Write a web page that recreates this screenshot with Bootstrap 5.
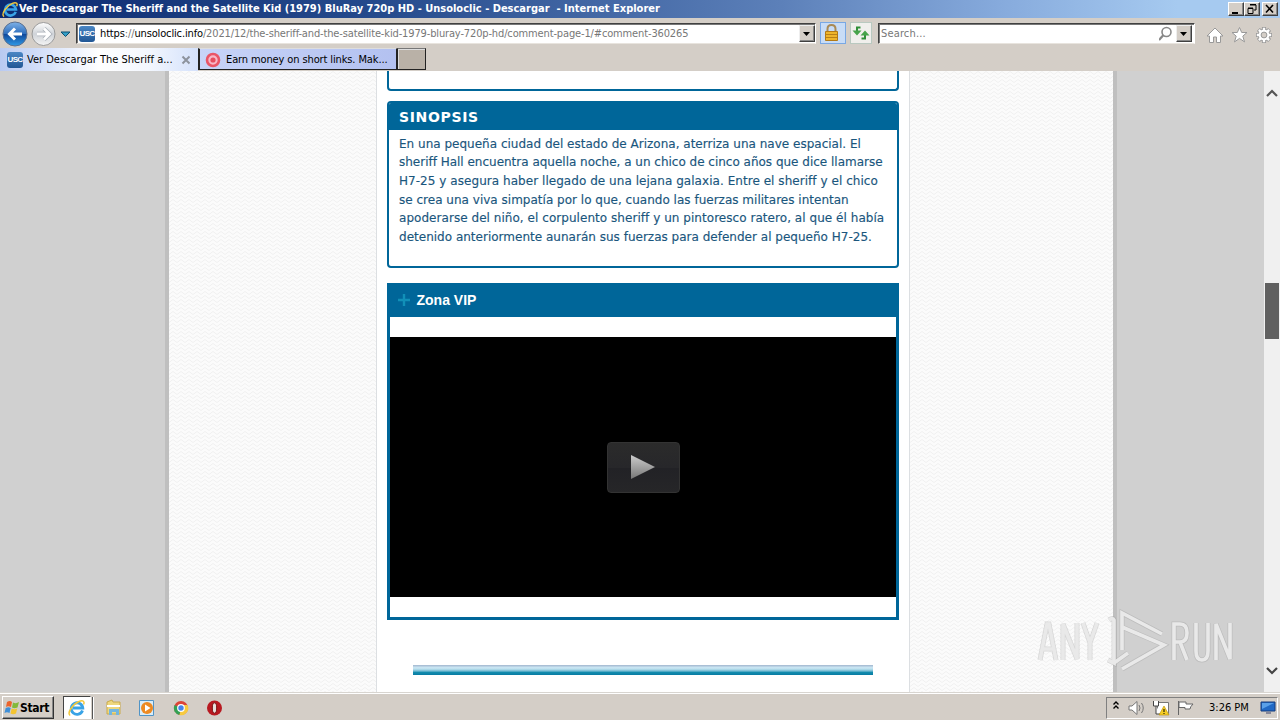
<!DOCTYPE html>
<html lang="es">
<head>
<meta charset="utf-8">
<title>Ver Descargar The Sheriff and the Satellite Kid</title>
<link rel="stylesheet" href="https://cdn.jsdelivr.net/npm/bootstrap@5.3.0/dist/css/bootstrap.min.css">
<style>
body{width:1280px;height:720px;overflow:hidden;background:#d4cec7;color:#000;font:11px/14px "DejaVu Sans Condensed","DejaVu Sans",sans-serif;font-stretch:condensed;white-space:nowrap}
svg{display:block;flex:none}
.titlebar{height:18px;background:linear-gradient(90deg,#0c2a70 0,#264b8d 30%,#5c80b9 61%,#86aadc 78%,#a6caf0 92%);color:#fff;font-weight:700;padding-left:2px}
.titlebar .caption{white-space:pre}
.winbtn{width:16px;height:14px;background:#d4cec7;border:1px solid;border-color:#fff #404040 #404040 #fff;box-shadow:inset -1px -1px #888}
.navrow{height:30px;padding-left:2px;border-top:1px solid #d4cec7}
.field{height:21px;background:#fff;border:1px solid;border-color:#404040 #fff #e8e4de #404040;box-shadow:inset 1px 1px #777;margin-top:4px}
.dropbtn{width:16px;height:17px;background:#d4cec7;border:1px solid;border-color:#eee #404040 #404040 #eee;box-shadow:inset -1px -1px #888}
.usc{width:16px;height:16px;border-radius:3px;background:linear-gradient(#4a86c4,#225795);color:#fff;font:bold 8px/16px "Liberation Sans Narrow","Liberation Sans",sans-serif;text-align:center;letter-spacing:-.6px}
.addr{letter-spacing:-.14px;color:#777;margin-left:5px}
.addr b{font-weight:400;color:#000}
.lockbtn{width:26px;height:22px;background:#c8dcf6;border:1px solid #79a8e4;margin:3px 0 0 4px}
.refresh{width:22px;height:22px;background:#f0efec;border:1px solid #b9c9c0;margin:3px 0 0 4px}
.tabs{height:23px}
.tab1{width:198px;height:23px;background:linear-gradient(90deg,#b9caf1 0,#d9e4fb 25%,#fff 50%,#f3f7fe 75%,#d4e1fb);padding:0 7px 0 7px}
.tab2{width:199px;height:22px;background:linear-gradient(90deg,#c8d4f8,#b3c1f0);border:1px solid #222;border-top-color:#ddd;border-left-width:2px;padding:2px 0 0 5px}
.tab3{width:29px;height:22px;background:#b9b1a7;border:1px solid #222;border-top:1px solid #777;box-shadow:inset 1px 1px #ddd}
.view{height:621px;background:#d0d0d0}
.edge{width:4px;background:#bfbfbf}
.weave{background:#fbfbfb url("data:image/svg+xml,%3Csvg xmlns='http://www.w3.org/2000/svg' width='8' height='4'%3E%3Cpath d='M0 3.500L4 .5l4 3' fill='none' stroke='%23f0f0f0'/%3E%3C/svg%3E")}
.page-col{width:534px;background:#fff;border:1px solid #dcdfe2;border-width:0 1px;padding:0 10px}
.prev-box{height:20px;border:2px solid #006699;border-top:0;border-radius:0 0 4px 4px}
.synopsis{height:167px;margin-top:10px;border:2px solid #006699;border-radius:4px;color:#1a567d;overflow:hidden}
.synopsis h2{height:27px;margin:0;background:#006699;color:#fff;font:bold 14px/28px "DejaVu Sans",sans-serif;font-stretch:normal;letter-spacing:.65px;padding-left:10px}
.synopsis p{margin:4.500px 0 0 10px;font:12px/18.67px "DejaVu Sans",sans-serif;font-stretch:normal;-webkit-text-stroke:.15px #1a567d}
.synopsis span{display:block;letter-spacing:.01px}
.synopsis .tight{letter-spacing:-.01px}
.synopsis .loose{letter-spacing:.045px}
.vip{height:337px;margin-top:15px;border:3px solid #006699}
.vip h2{height:31px;margin:0;background:#006699;color:#fff;font:bold 14px/28px "Liberation Sans",sans-serif;padding:0 0 4px 6.500px;gap:6px}
.video{height:260px;margin:20px 0;background:#000}
.playbtn{width:73px;height:51px;border:1px solid #333;border-radius:4px;background:linear-gradient(#2b2b2b,#27272a 50%,#222226 52%,#262628)}
.divider{width:460px;height:10px;margin:45px 0 0 26px;background:linear-gradient(#a9bfd5 0 10%,#cbe5f3 20%,#bde0ee 40%,#72bad2 60%,#128bad 75%,#087ca3)}
.vscroll{width:16px;background:#f0f0f0;padding:17px 0 16px}
.thumb{width:14px;height:56px;background:#606060;margin:185px 0 0 1px}
.taskbar{height:28px;border-top:1px solid #d8d5d0;box-shadow:inset 0 1px #fff;padding:2px 0 0 2px}
.startbtn{width:52px;height:23px;border:1px solid;border-color:#fff #333 #333 #fff;box-shadow:inset -1px -1px #888;font-weight:700;font-size:12px;padding-left:1px;letter-spacing:-.35px}
.actv{width:28px;height:23px;background:#fff;border:1px solid #444;border-color:#444 #fff #fff #444;margin-left:9px}
.actsep{width:2px;height:22px;background:#fff;border-left:1px solid #555;margin-left:1px}
.tray{width:172px;height:22px;border:1px solid;border-color:#808080 #fff #fff #808080;margin:0 2px 0 auto;padding-left:5px}
.wm{position:absolute;left:1030px;top:600px}
</style>
<script src="https://cdn.jsdelivr.net/npm/bootstrap@5.3.0/dist/js/bootstrap.bundle.min.js"></script>
</head>
<body>
<svg width="0" height="0" class="position-absolute"><defs>
<linearGradient id="bl" x2="0" y2="1"><stop stop-color="#7fb2e8"/><stop offset=".48" stop-color="#2f6fbd"/><stop offset=".52" stop-color="#104a9c"/><stop offset="1" stop-color="#2f9be8"/></linearGradient>
<linearGradient id="gr" x2="0" y2="1"><stop stop-color="#fff"/><stop offset=".5" stop-color="#cfd3d8"/><stop offset="1" stop-color="#f4f4f4"/></linearGradient>
<linearGradient id="pl" x2="0" y2="1"><stop stop-color="#ccc"/><stop offset="1" stop-color="#777"/></linearGradient>
<symbol id="ie" viewBox="0 0 18 18"><path d="M14.5 11.5A5.8 5.8 0 1 1 14.8 9H5" fill="none" stroke="#39a3e6" stroke-width="2.8"/><path d="M2.2 16.5C-1.5 14 5 5 11 2.5c4-1.700 6 0 4.500 3" fill="none" stroke="#f2c83c" stroke-width="1.5"/></symbol>
</defs></svg>

<header class="titlebar d-flex align-items-center">
<svg width="17" height="17"><use href="#ie"/></svg>
<span class="caption">Ver Descargar The Sheriff and the Satellite Kid (1979) BluRay 720p HD - Unsoloclic - Descargar  - Internet Explorer</span>
<div class="d-flex ms-auto" style="margin-right:2px">
<div class="winbtn"><svg width="14" height="12"><path d="M3 9h6v2H3z"/></svg></div>
<div class="winbtn"><svg width="14" height="12"><path d="M5 2h6v5H9M5 1.500h6M3 5.500h5v5H3zM3 5h5" fill="none" stroke="#000"/></svg></div>
<div class="winbtn" style="margin-left:2px"><svg width="14" height="12"><path d="M3 2l7 7.500M10 2L3 9.500" stroke="#000" stroke-width="1.600"/></svg></div>
</div>
</header>

<nav class="navrow d-flex">
<svg width="54" height="29"><circle cx="13" cy="15" r="12" fill="url(#bl)" stroke="#5a6f8e"/><path d="M20 15H8M13 9.500L7.500 15l5.500 5.500" fill="none" stroke="#fff" stroke-width="3"/><circle cx="41.500" cy="15" r="11.500" fill="url(#gr)" stroke="#9a9a9a"/><path d="M35 15h12M42 9.500l5.500 5.500-5.500 5.500" fill="none" stroke="#aab0b8" stroke-width="4.400"/><path d="M35 15h12M42 9.500l5.500 5.500-5.500 5.500" fill="none" stroke="#fff" stroke-width="2.800"/></svg>
<svg width="20" height="29"><path d="M5 13h9l-4.500 4.500z" fill="#35a0c8" stroke="#0d4f70"/></svg>
<div class="field d-flex align-items-center" style="width:740px;padding-left:2px"><div class="usc">USC</div><span class="addr"><b>https</b>://<b>unsoloclic.info</b>/2021/12/the-sheriff-and-the-satellite-kid-1979-bluray-720p-hd/comment-page-1/#comment-360265</span><div class="dropbtn ms-auto"><svg width="14" height="15"><path d="M3 6h7l-3.500 4z"/></svg></div></div>
<div class="lockbtn"><svg width="24" height="20"><path d="M6.500 9V6q0-4 4-4t4 4v3" fill="none" stroke="#a98a55" stroke-width="2"/><path d="M4.500 8.500h12v9h-12z" fill="#eeb52c" stroke="#b37a16"/><path d="M5 11.500h11M5 14.500h11" stroke="#b98019"/></svg></div>
<div class="refresh"><svg width="20" height="20"><path d="M9.500 4.500H6V9M10.500 15.500H14V11" fill="none" stroke="#2f8f38" stroke-width="2"/><path d="M1.500 7.500h9L6 12.500zM9.500 12.500h9L14 7.500z" fill="#46a34a"/></svg></div>
<div class="field d-flex align-items-center" style="width:317px;margin-left:6px;padding:0 3px 0 2px;color:#777"><span style="letter-spacing:.15px">Search...</span><svg class="ms-auto" width="16" height="16"><circle cx="7.500" cy="6" r="4.500" fill="none" stroke="#888" stroke-width="1.600"/><path d="M4.500 9L0 14" stroke="#888" stroke-width="2.200"/></svg><div class="dropbtn" style="margin-right:-1px;margin-left:1px"><svg width="14" height="15"><path d="M3 6h7l-3.500 4z"/></svg></div></div>
<svg width="72" height="29" style="margin-left:10px"><g fill="#fff" stroke="#999"><path d="M2 17L10 9l8 8h-2.500v6.500h-4V18h-3v5.500h-4V17z"/><path d="M34.500 8.500l2.200 5h5.300l-4.200 3.600 1.700 5.800-5-3.500-5 3.500 1.700-5.800-4.200-3.600h5.300z"/></g><g transform="translate(59 16)"><path d="M0-8V8M-8 0H8M-5.600-5.600L5.600 5.600M5.600-5.600L-5.600 5.600" stroke="#999" stroke-width="4.200"/><circle r="5.800" fill="#fff" stroke="#999"/><path d="M0-7.200V7.200M-7.200 0H7.200M-5.100-5.100L5.100 5.100M5.100-5.100L-5.100 5.100" stroke="#fff" stroke-width="2.400"/><circle r="2.900" fill="#d4cec7" stroke="#999"/></g></svg>
</nav>

<div class="tabs d-flex">
<div class="tab1 d-flex align-items-center"><div class="usc">USC</div><span style="margin:1px 0 0 4px">Ver Descargar The Sheriff a...</span><svg class="ms-auto" width="10" height="10"><path d="M1.500 1.500l7 7M8.500 1.500l-7 7" stroke="#8d939d" stroke-width="2"/></svg></div>
<div class="tab2 d-flex align-items-center"><svg width="16" height="16"><circle cx="8" cy="8" r="6" fill="#f7b8c8" stroke="#ea5566" stroke-width="2.600"/><circle cx="8" cy="8" r="2.600" fill="#e64e5e"/></svg><span style="margin-left:5px;letter-spacing:-.12px">Earn money on short links. Mak...</span></div>
<div class="tab3"></div>
</div>

<main class="view d-flex">
<div style="width:165px"></div><div class="edge"></div><div class="weave" style="width:207px"></div>
<section class="page-col">
<div class="prev-box"></div>
<article class="synopsis"><h2>SINOPSIS</h2><p><span>En una pequeña ciudad del estado de Arizona, aterriza una nave espacial. El</span><span class="tight">sheriff Hall encuentra aquella noche, a un chico de cinco años que dice llamarse</span><span class="loose">H7-25 y asegura haber llegado de una lejana galaxia. Entre el sheriff y el chico</span><span>se crea una viva simpatía por lo que, cuando las fuerzas militares intentan</span><span class="loose">apoderarse del niño, el corpulento sheriff y un pintoresco ratero, al que él había</span><span>detenido anteriormente aunarán sus fuerzas para defender al pequeño H7-25.</span></p></article>
<article class="vip"><h2 class="d-flex align-items-center"><svg width="14" height="14"><path d="M7 1v12M1 7h12" stroke="#1190b8" stroke-width="2.400"/></svg><span>Zona VIP</span></h2>
<div class="video d-flex align-items-center justify-content-center"><div class="playbtn d-flex align-items-center justify-content-center"><svg width="24" height="24"><path d="M0 0l24 12L0 24z" fill="url(#pl)"/></svg></div></div></article>
<div class="divider"></div>
</section>
<div class="weave" style="width:203px"></div><div class="edge"></div><div class="flex-fill"></div>
<div class="vscroll d-flex flex-column"><svg width="16" height="10"><path d="M3 8l5-5 5 5" fill="none" stroke="#555" stroke-width="2.200"/></svg><div class="thumb"></div><svg class="mt-auto" width="16" height="10"><path d="M3 2l5 5 5-5" fill="none" stroke="#444" stroke-width="2.200"/></svg></div>
</main>

<footer class="taskbar d-flex align-items-center">
<div class="startbtn d-flex align-items-center"><svg width="16" height="16"><path d="M3 2q3-2 5 0L7 7Q4 5.500 2 7z" fill="#ec642c"/><path d="M9 2.500q3 1.500 6-.5l-1.500 5.500Q10 9 8 7.500z" fill="#83b93b"/><path d="M1.700 8q3-1.500 5 0L5.500 13Q3 11.500.5 13z" fill="#3f8fd8"/><path d="M7.700 8.500q3 1.500 5.500 0L12 13.500q-3 1.500-5.500 0z" fill="#f4c430"/></svg><span>Start</span></div>
<div class="actv d-flex align-items-center justify-content-center"><svg width="18" height="18"><use href="#ie"/></svg></div><div class="actsep"></div>
<svg width="130" height="20" style="margin-left:12px"><path d="M1 4l5-2 1 2h7v12H1z" fill="#eed77c" stroke="#c9aa4c"/><path d="M1 8h13" stroke="#fff" stroke-width="2"/><path d="M3 17v-6h10v6h-3v-3H6v3z" fill="#73b6df"/><path d="M33.500 2.500h14v15h-14z" fill="#d9edf9" stroke="#5194c6"/><circle cx="41" cy="10" r="6" fill="#ed8a22"/><path d="M39 6.500v7l5.500-3.500z" fill="#fff"/><circle cx="75" cy="10" r="7" fill="#dc4437"/><path d="M75 10L68.500 7a7 7 0 0 0 5 10z" fill="#33a154"/><path d="M75 10l-1.500 7A7 7 0 0 0 81.500 7H75z" fill="#f7ca3f"/><circle cx="75" cy="10" r="3.300" fill="#4584ec" stroke="#fff" stroke-width="1.200"/><circle cx="108.500" cy="10" r="7.500" fill="#b81920"/><ellipse cx="108.500" cy="10" rx="2.200" ry="5.200" fill="#e8e0dc" stroke="#711"/></svg>
<div class="tray d-flex align-items-center"><svg width="90" height="20"><path d="M1.500 6.500L4 4l2.500 2.500M1.500 10.500L4 8l2.500 2.500" fill="none" stroke="#000" stroke-width="1.400"/><g fill="#fff" stroke="#777"><path d="M17 8h3l5-4.500v13L20 12h-3z"/><path d="M27 7q2 3 0 6M29.500 5q3.500 5 0 10" fill="none"/><path d="M45.500 4.500h11v11h-11z"/><path d="M41.500 3v5h5V3M44 8v8h5" stroke="#444"/><path d="M66.500 3v14M67 4h7v2h7q-3 3-3 5h-5V9.500h-6z" stroke="#666"/></g><path d="M52 8l5 9H47z" fill="#f6ce25" stroke="#b78c00" stroke-width=".6"/><path d="M52 11v3m0 1v1" stroke="#000"/></svg><span style="margin-left:7px">3:26 PM</span><svg width="16" height="16" style="margin-left:11px"><path d="M1 2h14v9H1z" fill="#2169c5" stroke="#163d7c"/><path d="M2 3h12L2 9z" fill="#5aa0e8"/><path d="M6 12h5v2H6z" fill="#889"/></svg></div>
</footer>

<svg class="wm" width="220" height="80"><defs><g id="anyrun" fill="none"><path d="M10 60L17 24h2l7 36M13 49h11M33 60V24l14 35V23M53 23l7 20v17M67 23l-7 20M79 20q4-3 5 0v43l-6-3"/><path d="M84 63L98 53M92 50V13L132 34M92 27L134 45 92 69M144 60V24h6q7 0 7 9t-7 9h-6M150 42l7 18M166 23v28q0 9 6 9t6-9V23M186 60V24l14 35V23"/></g></defs><use href="#anyrun" stroke="#999" stroke-opacity=".35" stroke-width="5"/><use href="#anyrun" stroke="#e9e9e9" stroke-width="3.600"/></svg>
</body>
</html>
